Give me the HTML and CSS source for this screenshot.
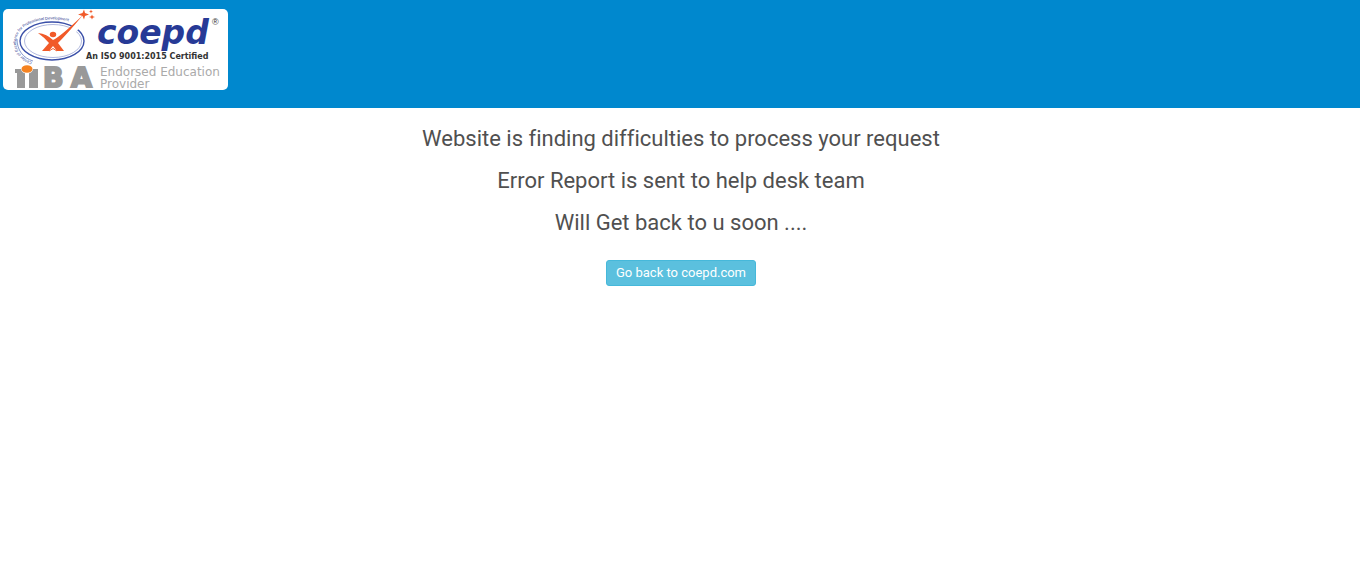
FILE: index.html
```
<!DOCTYPE html>
<html lang="en">
<head>
    <meta charset="UTF-8">
    <meta name="viewport" content="width=device-width, initial-scale=1.0">
    <title>COEPD</title>
    <link rel="stylesheet" href="styles.css">
</head>
<body>
    <header class="header">
        <svg class="logo" width="225" height="81" viewBox="3 9 225 81" role="img" aria-label="coepd">
            <!-- rings -->
            <ellipse cx="52" cy="41" rx="32" ry="19" fill="none" stroke="#3a4fa8" stroke-width="1.4"/>
            <ellipse cx="53" cy="41" rx="28.500" ry="16.500" fill="none" stroke="#8f9bd0" stroke-width="0.7"/>
            <path d="M17 39 C17 50 23 58 33 61" fill="none" stroke="#5a6cb8" stroke-width="0.7"/>
            <path id="ring" d="M32 62 C12 55 12 34 26 26 C38 18 58 16 90 27" fill="none"/>
            <text class="ring-text"><textPath href="#ring">Center of Excellence for Professional Development</textPath></text>
            <!-- figure and star -->
            <path d="M64 36 L82 15 L87 19 L70 39 Z" fill="#fff"/>
            <path d="M38 33 Q47 34 53 40 Q60 37 83 15 Q68 33 58 43 L64 51 L57 51 L53 46 L49 51 L42 51 L49 43 Q45 38 38 33 Z" fill="#f15a29"/>
            <path d="M49 51 L53 48.500 L57 51" fill="none" stroke="#f15a29" stroke-width="1"/>
            <ellipse cx="53" cy="34.500" rx="3.200" ry="2.700" fill="#f15a29"/>
            <path d="M84 9.500 L85 13 L89 14.500 L85 16 L84 19.500 L82.500 16 L78 14.500 L82.500 13 Z" fill="#f15a29"/>
            <path d="M91 9.500 L91.600 11 L93 11.500 L91.600 12 L91 13.500 L90.400 12 L89 11.500 L90.400 11 Z" fill="#f15a29"/>
            <path d="M92 14.500 L92.800 16.200 L95 17 L92.800 17.800 L92 19.500 L91.200 17.800 L89 17 L91.200 16.200 Z" fill="#f15a29"/>
            <text class="brand" x="97" y="44">coepd</text>
            <text class="reg" x="212" y="25">®</text>
            <text class="iso" x="86" y="59">An ISO 9001:2015 Certified</text>
            <!-- iiba -->
            <path d="M15 69 H25 V88 H17 V73 H15 Z M28 73 H26 V69 H38 V88 H29 V73 Z" fill="#999"/>
            <ellipse cx="27" cy="69" rx="6" ry="4.600" fill="#fff"/>
            <ellipse cx="27" cy="69" rx="5.500" ry="3.800" fill="#f58220"/>
            <text class="iiba" x="43 71" y="87">BA</text>
            <text class="provider" x="100" y="76">Endorsed Education</text>
            <text class="provider" x="100" y="88">Provider</text>
        </svg>
    </header>

    <main class="message">
        <p>Website is finding difficulties to process your request</p>
        <p>Error Report is sent to help desk team</p>
        <p>Will Get back to u soon ....</p>
        <a class="btn" href="index.html">Go back to coepd.com</a>
    </main>
</body>
</html>
```
FILE: styles.css
```
body {
    margin: 0;
    background-color: #fff;
    color: #505050;
    font-family: Roboto, sans-serif;
}
.header {
    background-color: #0088ce;
    padding: 9px 3px 18px;
}
.logo {
    display: block;
    background-color: #fff;
    border-radius: 5px;
}
.ring-text {
    font: 4px "Liberation Sans", sans-serif;
    fill: #27348b;
}
.brand {
    font: italic bold 33px "DejaVu Sans", sans-serif;
    fill: #273a96;
}
.reg {
    font: 9px "Liberation Sans", sans-serif;
    fill: #333;
}
.iso {
    font: bold 8px "DejaVu Sans", sans-serif;
    fill: #333;
}
.iiba {
    font: bold 27px "DejaVu Sans", sans-serif;
    fill: #999;
    stroke: #999;
    stroke-width: 2px;
}
.provider {
    font: 12px "DejaVu Sans", sans-serif;
    fill: #aaa;
}
.message {
    padding: 20px 0 20px 2px;
    text-align: center;
    font-variant-ligatures: none;
}
.message p {
    margin: 0 0 20px;
    font-size: 22px;
    line-height: 22px;
}
.btn {
    display: inline-block;
    margin-top: 6px;
    padding: 3px 9px;
    background-color: #5bc0de;
    border: 1px solid #46b8da;
    border-radius: 3px;
    color: #fff;
    font-size: 13px;
    line-height: 18px;
    text-decoration: none;
}
.btn:hover {
    background-color: #31b0d5;
}
```
